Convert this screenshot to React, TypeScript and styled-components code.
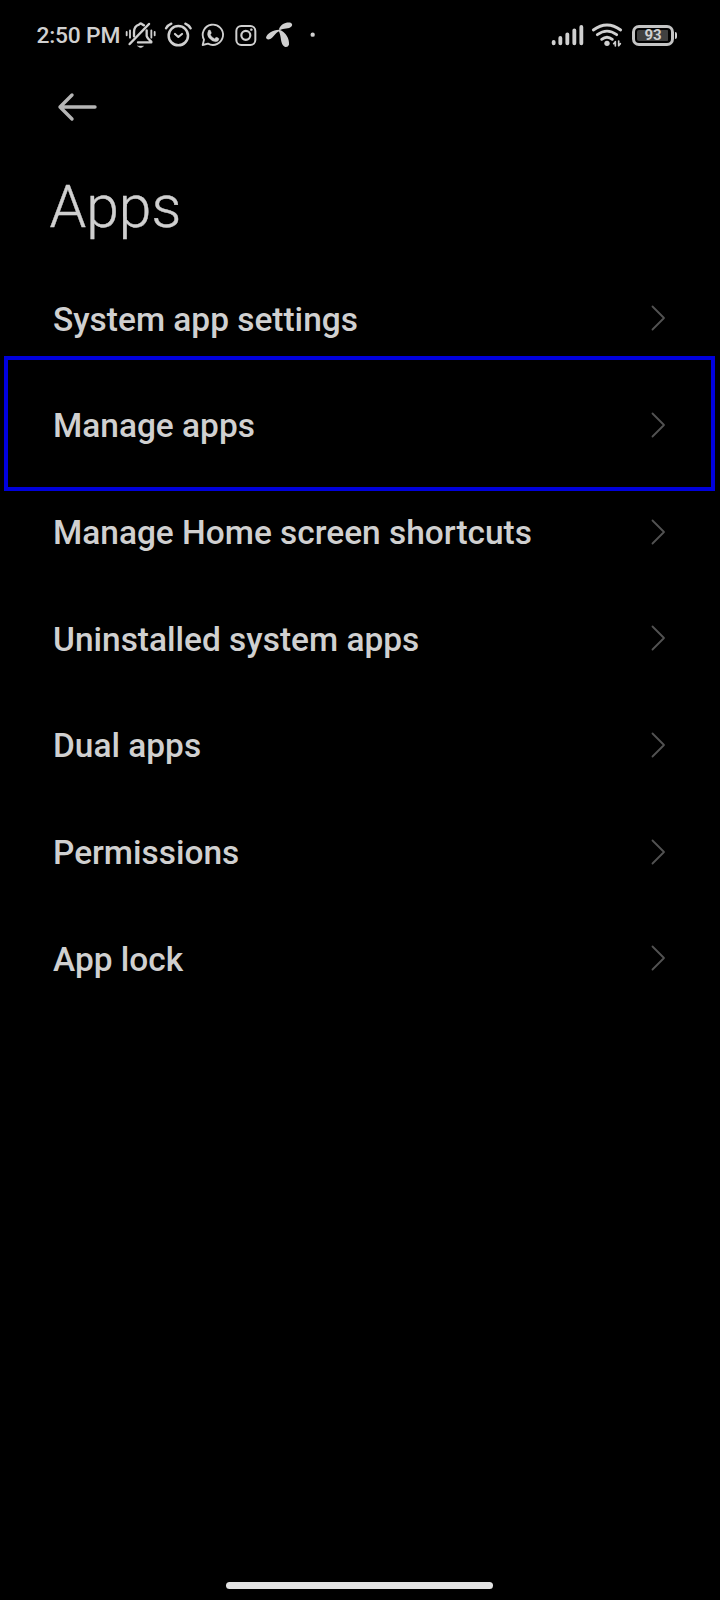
import React from "react";
import styled, { createGlobalStyle } from "styled-components";

const INK = "#d0d0d0";

const GlobalStyle = createGlobalStyle`
  html, body { margin: 0; background: #000; }
  * { box-sizing: border-box; }
`;

const Screen = styled.div`
  display: flex;
  flex-direction: column;
  width: 720px;
  height: 1600px;
  background: #000;
  color: ${INK};
  font-family: Roboto, sans-serif;
  overflow: hidden;
`;

const StatusBar = styled.header`
  display: flex;
  height: 55px;
  padding: 15px 41px 0 36.5px;
`;

const Clock = styled.span`
  width: 87.5px;
  height: 40px;
  line-height: 41px;
  font-size: 22.8px;
  font-weight: 500;
  letter-spacing: -0.2px;
  white-space: nowrap;
`;

const Spacer = styled.div<{ $width?: number }>`
  flex: ${({ $width }) => ($width ? `0 0 ${$width}px` : "1")};
`;

const Glyph = styled.svg`
  display: block;
  flex: none;
  fill: none;
  stroke: ${INK};
  stroke-linecap: round;
  stroke-linejoin: round;
`;

const Battery = styled.div`
  display: flex;
  align-items: center;
  width: 47px;
  height: 21px;
  margin-top: 9.5px;
`;

const BatteryShell = styled.div`
  width: 42px;
  height: 21px;
  padding: 2px;
  border: 3px solid #c4c4c4;
  border-radius: 7px;
`;

const BatteryLevel = styled.div`
  display: flex;
  align-items: center;
  justify-content: center;
  height: 100%;
  border-radius: 2px;
  background: linear-gradient(to right, #404040 31px, #000 31px);
  font-size: 15px;
  font-weight: 700;
  line-height: 11px;
`;

const BatteryTip = styled.div`
  width: 2px;
  height: 7px;
  margin-left: 1px;
  border-radius: 0 2px 2px 0;
  background: ${INK};
`;

const Toolbar = styled.nav`
  display: flex;
  height: 104px;
  padding: 37px 0 0 56px;
`;

const BackButton = styled.button`
  display: block;
  width: 44px;
  height: 30px;
  padding: 0;
  border: 0;
  background: none;
`;

const Title = styled.h1`
  height: 106px;
  margin: 0;
  padding-left: 49.5px;
  font-size: 58.8px;
  font-weight: 300;
  line-height: 96px;
  -webkit-text-stroke: 0.4px ${INK};
`;

const List = styled.ul`
  margin: 0;
  padding: 0;
  list-style: none;
`;

const Row = styled.li`
  position: relative;
  display: flex;
  align-items: center;
  justify-content: space-between;
  height: 106.667px;
  padding: 0 53px 0 53px;
`;

const Label = styled.span`
  font-size: 33.45px;
  font-weight: 500;
  line-height: 40px;
  padding-top: 3px;
  white-space: nowrap;
`;

const Highlight = styled.div`
  position: absolute;
  left: 4px;
  right: 5px;
  top: -15.8px;
  height: 135.4px;
  border: 4px solid #0000dc;
`;

const HomeIndicator = styled.div`
  width: 267px;
  height: 7px;
  margin: auto auto 11px 226px;
  border-radius: 4px;
  background: #e2e2e2;
`;

const SilentBell = () => (
  <Glyph width="33" height="40" viewBox="12 0 99 120" strokeWidth="7">
    <path d="M29 87 87 27" strokeWidth="7.5" />
    <path d="M42 64V52Q42 33 57 29Q62 22 68 29L72 31" />
    <path d="M80 46V63Q82 70 94 80V82H54" />
    <path d="M53 93H71Q66 98 62 98T53 93Z" fill={INK} strokeWidth="1" />
    <path d="M20 51V61M30 46V68M94 46V68M104 51V61" strokeWidth="5.5" />
  </Glyph>
);

const Alarm = () => (
  <Glyph width="35" height="40" viewBox="123 0 105 120" strokeWidth="7.5">
    <circle cx="175" cy="62" r="29" />
    <path d="M138 40Q144 30 154 26M212 40Q206 30 196 26" strokeWidth="7" />
    <path d="M165 57 175 66 186 57" strokeWidth="6.5" />
  </Glyph>
);

const ChatApp = () => (
  <Glyph width="32" height="40" viewBox="18 0 96 120" strokeWidth="5.5">
    <path d="M38 90 42 74A30.500 30.500 0 1 1 54 86Z" />
    <path
      d="M55 47Q58 43 61 46L64 53Q64 56 61 59Q65 67 74 71L78 67Q81 66 87 71Q86 80 77 80Q65 79 57 69T55 47Z"
      fill={INK}
      strokeWidth="1"
    />
  </Glyph>
);

const PhotoApp = () => (
  <Glyph width="34" height="40" viewBox="114 0 102 120" strokeWidth="6">
    <rect x="139" y="33" width="57" height="57" rx="15" />
    <circle cx="167.500" cy="61" r="13.500" strokeWidth="6.500" />
    <circle cx="184" cy="44" r="3.500" fill={INK} strokeWidth="0.500" />
  </Glyph>
);

const Propeller = () => (
  <Glyph width="30" height="40" viewBox="222 0 90 120">
    <g fill={INK} stroke="none">
      <path d="M267 43C271 28 288 20 302 23Q309 27 305 34C296 44 282 38 269 46Z" />
      <path d="M267 44C249 44 230 56 228 68Q230 75 238 73C251 69 255 53 269 48Z" />
      <path d="M268 44C288 50 299 72 297 89Q293 98 284 95C270 87 275 64 266 47Z" />
    </g>
  </Glyph>
);

const MoreDot = () => (
  <Glyph width="14" height="40" viewBox="348 0 42 120">
    <circle cx="368" cy="59" r="6.5" fill={INK} stroke="none" />
  </Glyph>
);

const Signal = () => (
  <Glyph width="38" height="40" viewBox="30 0 114 120" strokeWidth="11.5">
    <path d="M41 81V85M61 69V85M82 58V85M103 46V85M124 36V85" />
  </Glyph>
);

const Wifi = () => (
  <Glyph width="34" height="40" viewBox="150 0 102 120" strokeWidth="8.5">
    <path d="M160 45Q201 15 242 45" />
    <path d="M172 59Q201 38 230 59" />
    <path d="M185 73Q201 60 217 73" />
    <circle cx="201" cy="85" r="8" fill={INK} stroke="none" />
    <path d="M226 93V80L221 86M236 78V92L241 86" strokeWidth="5" />
  </Glyph>
);

const BackArrow = () => (
  <Glyph width="44" height="30" viewBox="0 0 44 30" strokeWidth="3.4">
    <path d="M4 15H39M16 3 4 15 16 27" stroke="#b5b5b5" />
  </Glyph>
);

const Chevron = () => (
  <Glyph width="16" height="28" viewBox="0 0 16 28" strokeWidth="1.8">
    <path d="M1.500 2.500 13 14 1.500 25.500" stroke="#525252" />
  </Glyph>
);

const items = [
  { label: "System app settings" },
  { label: "Manage apps", highlighted: true },
  { label: "Manage Home screen shortcuts" },
  { label: "Uninstalled system apps" },
  { label: "Dual apps" },
  { label: "Permissions" },
  { label: "App lock" },
];

export default function App() {
  return (
    <>
      <GlobalStyle />
      <Screen>
        <StatusBar>
          <Clock>2:50 PM</Clock>
          <SilentBell />
          <Spacer $width={4} />
          <Alarm />
          <ChatApp />
          <PhotoApp />
          <Spacer $width={2} />
          <Propeller />
          <Spacer $width={12} />
          <MoreDot />
          <Spacer />
          <Signal />
          <Spacer $width={2} />
          <Wifi />
          <Spacer $width={8} />
          <Battery>
            <BatteryShell>
              <BatteryLevel>93</BatteryLevel>
            </BatteryShell>
            <BatteryTip />
          </Battery>
        </StatusBar>
        <Toolbar>
          <BackButton aria-label="Back">
            <BackArrow />
          </BackButton>
        </Toolbar>
        <Title>Apps</Title>
        <List>
          {items.map((item) => (
            <Row key={item.label}>
              <Label>{item.label}</Label>
              <Chevron />
              {item.highlighted && <Highlight />}
            </Row>
          ))}
        </List>
        <HomeIndicator />
      </Screen>
    </>
  );
}
